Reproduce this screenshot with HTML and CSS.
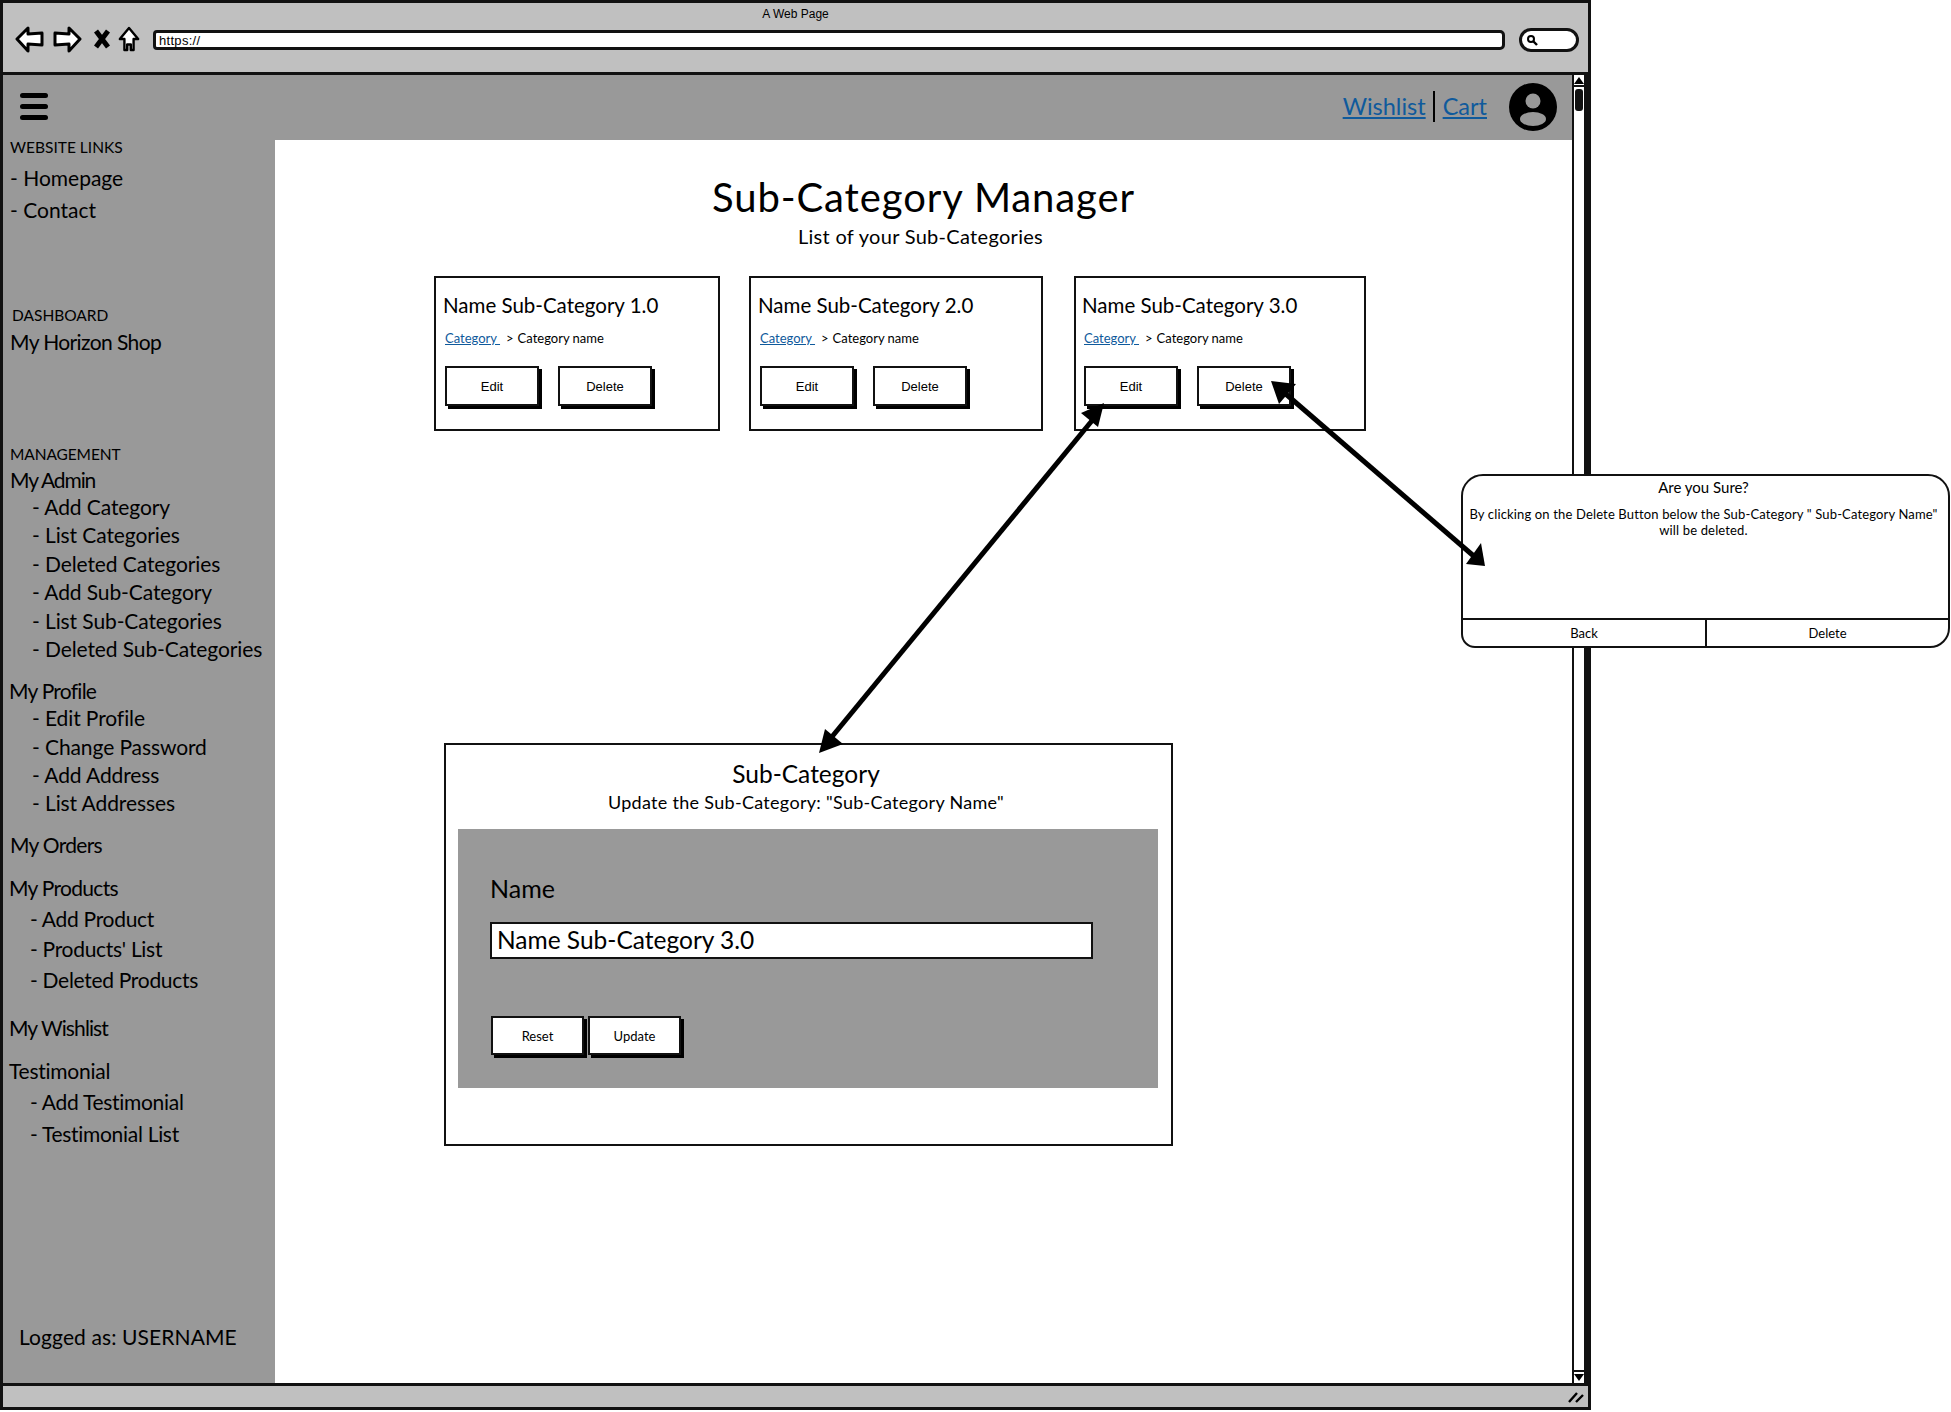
FILE: index.html
```html
<!DOCTYPE html>
<html lang="en">
<head>
<meta charset="utf-8">
<title>A Web Page</title>
<link rel="stylesheet" href="styles.css">
</head>
<body>
<div class="canvas">
  <div class="window">
    <div class="chrome">
      <div class="chrome-title">A Web Page</div>
      <div class="chrome-row">
        <svg class="i-back" width="29" height="28" viewBox="0 0 29 28"><path d="M2 14 13 3v6l14-1v12l-14-1v7z" fill="#fff" stroke="#000" stroke-width="3" stroke-linejoin="round"/></svg>
        <svg class="i-fwd" width="29" height="28" viewBox="0 0 29 28"><path d="M27 14 16 3v6L2 8v12l14-1v7z" fill="#fff" stroke="#000" stroke-width="3" stroke-linejoin="round"/></svg>
        <svg class="i-x" width="16" height="20" viewBox="0 0 16 20"><path d="M2 2l12 16M14 2 2 18" fill="none" stroke="#000" stroke-width="5"/></svg>
        <svg class="i-home" width="24" height="28" viewBox="0 0 24 28"><path d="M12 2 2 14h5v12h3v-6h4v6h3V14h5z" fill="#fff" stroke="#000" stroke-width="2.6" stroke-linejoin="round"/></svg>
        <div class="url">https://</div>
        <div class="search"><svg width="12" height="12" viewBox="0 0 12 12"><circle cx="5" cy="5" r="3" fill="none" stroke="#000" stroke-width="2"/><path d="M7 7l4 4" stroke="#000" stroke-width="2.4"/></svg></div>
      </div>
    </div>
    <div class="app">
      <div class="content">
        <header class="topbar">
          <div class="burger"><span></span><span></span><span></span></div>
          <nav class="toplinks"><a href="#">Wishlist</a><i class="sep"></i><a href="#">Cart</a></nav>
          <svg class="avatar" width="48" height="48" viewBox="0 0 48 48"><circle cx="24" cy="24" r="24" fill="#000"/><circle cx="24" cy="18" r="7.5" fill="#999"/><ellipse cx="24" cy="36" rx="13" ry="7" fill="#999"/></svg>
        </header>
        <div class="columns">
          <aside class="sidebar">
            <div class="nav-label">WEBSITE LINKS</div>
            <ul class="links"><li>- Homepage</li><li>- Contact</li></ul>
            <div class="nav-label dash">DASHBOARD</div>
            <div class="shop">My Horizon Shop</div>
            <div class="nav-label mgmt">MANAGEMENT</div>
            <div class="nav-title admin">My Admin</div>
            <ul class="tree t-admin"><li>- Add Category</li><li>- List Categories</li><li>- Deleted Categories</li><li>- Add Sub-Category</li><li>- List Sub-Categories</li><li>- Deleted Sub-Categories</li></ul>
            <div class="nav-title profile">My Profile</div>
            <ul class="tree t-profile"><li>- Edit Profile</li><li>- Change Password</li><li>- Add Address</li><li>- List Addresses</li></ul>
            <div class="nav-title orders">My Orders</div>
            <div class="nav-title products">My Products</div>
            <ul class="tree t-products"><li>- Add Product</li><li>- Products' List</li><li>- Deleted Products</li></ul>
            <div class="nav-title wishlist">My Wishlist</div>
            <div class="nav-title testimonial">Testimonial</div>
            <ul class="tree t-testimonial"><li>- Add Testimonial</li><li>- Testimonial List</li></ul>
            <div class="logged">Logged as: USERNAME</div>
          </aside>
          <main class="main">
            <h1 class="title">Sub-Category Manager</h1>
            <p class="subtitle">List of your Sub-Categories</p>
            <section class="cards">
              <article class="card c1">
                <h2>Name Sub-Category 1.0</h2>
                <div class="crumb"><a href="#">Category&nbsp;</a><span>&gt;</span><span>Category name</span></div>
                <div class="actions"><button class="btn">Edit</button><button class="btn">Delete</button></div>
              </article>
              <article class="card c2">
                <h2>Name Sub-Category 2.0</h2>
                <div class="crumb"><a href="#">Category&nbsp;</a><span>&gt;</span><span>Category name</span></div>
                <div class="actions"><button class="btn">Edit</button><button class="btn">Delete</button></div>
              </article>
              <article class="card c3">
                <h2>Name Sub-Category 3.0</h2>
                <div class="crumb"><a href="#">Category&nbsp;</a><span>&gt;</span><span>Category name</span></div>
                <div class="actions"><button class="btn">Edit</button><button class="btn">Delete</button></div>
              </article>
            </section>
            <section class="editor">
              <h2>Sub-Category</h2>
              <p>Update the Sub-Category: "Sub-Category Name"</p>
              <form class="form">
                <label class="form-label">Name</label>
                <div class="input">Name Sub-Category 3.0</div>
                <div class="form-actions"><button class="btn small" type="button">Reset</button><button class="btn small" type="button">Update</button></div>
              </form>
            </section>
          </main>
        </div>
      </div>
      <div class="scrollbar">
        <div class="sb-btn"><svg width="10" height="7" viewBox="0 0 10 7"><path d="M5 0l5 7H0z"/></svg></div>
        <div class="sb-thumb"></div>
        <div class="sb-btn down"><svg width="10" height="7" viewBox="0 0 10 7"><path d="M5 7 0 0h10z"/></svg></div>
      </div>
    </div>
    <div class="status">
      <svg width="16" height="12" viewBox="0 0 16 12"><path d="M1 11 9 2M8 11l7-7" stroke="#000" stroke-width="2.4" fill="none"/></svg>
    </div>
  </div>

  <aside class="modal">
    <div class="modal-body">
      <h3>Are you Sure?</h3>
      <p>By clicking on the Delete Button below the Sub-Category " Sub-Category Name" will be deleted.</p>
    </div>
    <div class="modal-foot"><span>Back</span><span>Delete</span></div>
  </aside>

  <svg class="arrows" width="1951" height="1412" viewBox="0 0 1951 1412">
    <path d="M1095 417 826 744" stroke="#000" stroke-width="5" fill="none"/>
    <path d="M1104 403 1098 427 1081 413z"/>
    <path d="M819 753 825 729 843 744z"/>
    <path d="M1280 389 1476 558" stroke="#000" stroke-width="5" fill="none"/>
    <path d="M1271 381 1296 384 1279 404z"/>
    <path d="M1485 566 1466 564 1481 543z"/>
  </svg>
</div>
</body>
</html>
```

FILE: styles.css
```css
* { box-sizing: border-box; }
html, body { margin: 0; padding: 0; background: #fff; }
body { font-family: "Lato", "Open Sans", sans-serif; color: #000; }
ul { list-style: none; margin: 0; padding: 0; }
h1, h2, h3, p { margin: 0; font-weight: 400; }
a { color: #0f5a9c; }

.canvas { position: relative; width: 1951px; height: 1412px; overflow: hidden; }

.window {
  width: 1591px; height: 1410px;
  border: 3px solid #111;
  display: flex; flex-direction: column;
  background: #fff;
}

.chrome { height: 72px; background: #c0c0c0; border-bottom: 3px solid #111; flex: none; }
.chrome-title { font: 12px/12px "Liberation Sans", sans-serif; text-align: center; padding-top: 5px; height: 16px; }
.chrome-row { display: flex; align-items: center; padding: 3px 0 0 12px; height: 36px; }
.i-back { margin-right: 9px; }
.i-fwd { margin-right: 12px; }
.i-x { margin-right: 8px; }
.i-home { width: 22px; margin-right: 13px; }
.url {
  width: 1352px; height: 20px; margin-top: 2px;
  background: #fff; border: 3px solid #111; border-radius: 4px 5px 5px 4px;
  font: 13px/15px "Liberation Sans", sans-serif; padding-left: 3px; letter-spacing: .3px;
}
.search {
  width: 60px; height: 24px; margin: 2px 0 0 14px;
  background: #fff; border: 3px solid #111; border-radius: 12px;
  display: flex; align-items: center; padding-left: 4px;
}

.app { flex: 1; display: flex; min-height: 0; }
.content { flex: 1; display: flex; flex-direction: column; min-width: 0; }

.topbar { height: 65px; background: #999; display: flex; align-items: center; padding: 0 15px 2px 17px; flex: none; }
.burger { width: 28px; display: flex; flex-direction: column; gap: 6px; }
.burger span { height: 5px; border-radius: 3px; background: #000; }
.toplinks { margin-left: auto; display: flex; align-items: center; font-size: 23.5px; padding-bottom: 1px; }
.sep { width: 2px; height: 31px; background: #000; margin: 0 8px 0 7px; }
.avatar { margin-left: 22px; }

.columns { flex: 1; display: flex; min-height: 0; }

.sidebar { width: 272px; background: #999; display: flex; flex-direction: column; padding-left: 7px; flex: none; font-size: 21px; }
.nav-label { font-size: 15.5px; line-height: 14px; }
.links { margin-top: 8px; }
.links li { line-height: 32px; }
.dash { margin-top: 82px; padding-left: 2px; }
.shop { line-height: 28px; margin-top: 6px; letter-spacing: -.6px; }
.mgmt { margin-top: 91px; letter-spacing: -.1px; }
.nav-title { line-height: 26px; }
.admin { margin-top: 6px; letter-spacing: -1.1px; }
.tree { padding-left: 22px; letter-spacing: -.1px; }
.t-admin { margin-top: 0; }
.t-admin li { line-height: 28.4px; }
.profile { margin-top: 15px; margin-left: -1px; letter-spacing: -.75px; }
.t-profile li { line-height: 28.3px; }
.orders { margin-top: 14px; letter-spacing: -.7px; }
.products { margin-top: 17px; margin-left: -1px; letter-spacing: -.7px; }
.t-products { margin-top: 3px; padding-left: 20px; letter-spacing: -.3px; }
.t-products li { line-height: 30.5px; }
.wishlist { margin-top: 20px; margin-left: -1px; letter-spacing: -.9px; }
.testimonial { margin-top: 17px; margin-left: -1px; letter-spacing: -.25px; }
.t-testimonial { margin-top: 2px; padding-left: 20px; letter-spacing: -.3px; }
.t-testimonial li { line-height: 32px; }
.logged { margin-top: auto; margin-bottom: 33px; margin-left: 9px; line-height: 26px; letter-spacing: .1px; }

.main { flex: 1; min-width: 0; background: #fff; padding-top: 32px; }
.title { font-size: 40px; line-height: 50px; letter-spacing: .9px; text-align: center; }
.subtitle { font-size: 20px; line-height: 28px; letter-spacing: .3px; text-align: center; margin-left: -6px; }

.cards { display: flex; margin: 26px 0 0 159px; }
.card { height: 155px; border: 2px solid #111; padding: 0 8px 0 9px; flex: none; }
.c1 { width: 286px; margin-right: 29px; }
.c2 { width: 294px; margin-right: 31px; }
.c3 { width: 292px; padding-left: 8px; }
.card h2 { font-size: 20.5px; line-height: 26px; margin: 14px 0 0 -2px; }
.crumb { display: flex; font-size: 13px; line-height: 16px; margin-top: 12px; }
.crumb a { margin-right: 6px; }
.crumb span:first-of-type { margin-right: 4px; }
.actions { display: flex; gap: 19px; margin-top: 20px; }
.btn {
  width: 94px; height: 40px; padding: 0;
  background: #fff; border: 2px solid #111; box-shadow: 3px 3px 0 #000;
  font: 13px "Liberation Sans", sans-serif; color: #000;
}
.small { font-family: "Lato", sans-serif; width: 93px; height: 39px; }

.editor { width: 729px; height: 403px; margin: 312px 0 0 169px; border: 2px solid #111; padding: 0 12px; text-align: center; }
.editor h2 { font-size: 24.5px; line-height: 30px; margin: 14px 5px 0 0; }
.editor p { font-size: 18px; line-height: 26px; letter-spacing: .3px; margin: 0 5px 14px 0; }
.form { height: 259px; background: #999; text-align: left; padding: 43px 0 0 32px; margin-right: 1px; }
.form-label { display: block; font-size: 25px; line-height: 32px; }
.input {
  width: 603px; height: 37px; margin-top: 18px;
  background: #fff; border: 2px solid #111;
  font-size: 24.5px; line-height: 31px; padding-left: 5px;
}
.form-actions { display: flex; gap: 4px; margin-top: 57px; padding-left: 1px; }

.scrollbar { width: 17px; border-left: 2px solid #111; border-right: 5px solid #111; background: #fff; display: flex; flex-direction: column; flex: none; margin-right: -1px; }
.sb-btn { height: 12px; border-bottom: 2px solid #111; display: flex; align-items: center; justify-content: center; flex: none; }
.sb-btn.down { margin-top: auto; border-top: 2px solid #111; border-bottom: 0; height: 13px; }
.sb-thumb { width: 8px; height: 22px; background: #111; border-radius: 3px; margin: 2px 0 0 1px; }

.status { height: 24px; background: #c0c0c0; border-top: 3px solid #111; flex: none; display: flex; justify-content: flex-end; align-items: center; padding-right: 4px; }

.modal {
  position: absolute; left: 1461px; top: 474px; width: 489px; height: 174px;
  background: #fff; border: 2px solid #111; border-radius: 22px 22px 20px 14px;
  display: flex; flex-direction: column; overflow: hidden;
}
.modal-body { flex: 1; text-align: center; padding: 1px 8px 0 4px; }
.modal-body h3 { font-size: 15px; font-weight: 400; line-height: 20px; }
.modal-body p { font-size: 13px; line-height: 16px; letter-spacing: .15px; margin-top: 9px; }
.modal-foot { height: 28px; border-top: 2px solid #111; display: grid; grid-template-columns: 242px 1fr; font-size: 13px; line-height: 26px; text-align: center; }
.modal-foot span + span { border-left: 2px solid #111; }

.arrows { position: absolute; left: 0; top: 0; pointer-events: none; }
```
